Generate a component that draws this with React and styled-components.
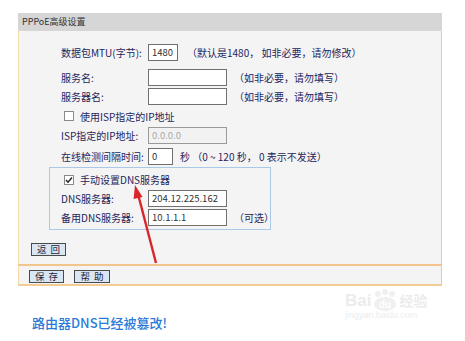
import React from 'react';
import styled, { createGlobalStyle } from 'styled-components';

const GlobalStyle = createGlobalStyle`
  body {
    margin: 0;
    background: #ffffff;
    font-family: "Noto Sans CJK SC", "DejaVu Sans", sans-serif;
  }
`;

const Page = styled.div`
  position: relative;
  width: 465px;
  height: 341px;
  padding: 13px 0 0 18px;
  box-sizing: border-box;
  overflow: hidden;
`;

const Panel = styled.div`
  width: 424px;
`;

const Header = styled.div`
  height: 18px;
  line-height: 18px;
  background: #d6d6d6;
  color: #333;
  font-size: 9px;
  padding-left: 4px;
`;

const Body = styled.div`
  background: #f4f4f4;
  border-left: 1px solid #f6dcae;
  border-right: 1px solid #f1c98f;
  border-bottom: 2px solid #f3c48b;
  padding: 12px 0 8px;
`;

const Row = styled.div`
  display: flex;
  align-items: center;
  height: ${p => p.h || 19}px;
  margin-top: ${p => p.mt || 0}px;
  padding-left: ${p => (p.inBox ? 11 : 42)}px;
  font-size: 10px;
  color: #25255c;
  white-space: nowrap;
`;

const Label = styled.span`
  width: 87px;
  flex: none;
`;

const Input = styled.div`
  box-sizing: border-box;
  width: ${p => p.w}px;
  height: 17px;
  line-height: 15px;
  border: 1px solid ${p => (p.disabled ? '#9a9a9a' : '#707070')};
  background: ${p => (p.disabled ? '#f2f2f2' : '#ffffff')};
  color: ${p => (p.disabled ? '#a8a8a8' : '#333')};
  font-size: 9.5px;
  padding-left: 3px;
  flex: none;
`;

const Hint = styled.span`
  margin-left: ${p => p.ml || 7}px;
`;

const CheckRow = styled(Row)`
  padding-left: ${p => (p.inBox ? 14 : 45)}px;
`;

const Box = styled.span`
  box-sizing: border-box;
  width: 10px;
  height: 10px;
  border: 1px solid #8a8a8a;
  background: #fff;
  margin-right: 6px;
  display: inline-flex;
  align-items: center;
  justify-content: center;
  flex: none;
`;

const DnsBox = styled.div`
  margin: 1px 0 0 30px;
  width: 222px;
  border: 1px solid #a9c9e6;
  padding: 2px 0;
  box-sizing: border-box;
`;

const Button = styled.div`
  box-sizing: border-box;
  width: ${p => p.w || 35}px;
  height: 13px;
  line-height: 11px;
  border: 1px solid #4a4a4a;
  background: #d9e6f4;
  color: #1e1e3c;
  font-size: 9.5px;
  letter-spacing: 4px;
  text-align: center;
  padding-left: 4px;
  white-space: nowrap;
  overflow: hidden;
  margin-right: ${p => p.mr || 0}px;
`;

const BackRow = styled.div`
  margin: 13px 0 0 12px;
  height: 13px;
  display: flex;
`;

const Footer = styled.div`
  background: #f4f4f4;
  border-left: 1px solid #f3d7a8;
  border-right: 1px solid #f1c98f;
  border-bottom: 2px solid #f3cb95;
  height: 20px;
  padding: 4px 0 0 10px;
  box-sizing: border-box;
  display: flex;
`;

const Notice = styled.div`
  margin: 27px 0 0 14px;
  font-size: 13px;
  font-weight: 500;
  color: #2b7ad8;
`;

const Overlay = styled.svg`
  position: absolute;
  left: 0;
  top: 0;
  pointer-events: none;
`;

const Watermark = styled.div`
  position: absolute;
  left: 345px;
  top: 289px;
  color: #ececec;
  font-family: "Liberation Sans", sans-serif;
`;

const MarkLine = styled.div`
  display: flex;
  align-items: center;
  font-size: ${p => p.size}px;
  font-weight: ${p => (p.bold ? 700 : 400)};
  line-height: 1;
`;

const MarkWord = styled.span`
  font-size: 14px;
  font-family: "Noto Sans CJK SC", sans-serif;
`;

function Check({ checked }) {
  return (
    <Box>
      {checked && (
        <svg width="8" height="8" viewBox="0 0 8 8">
          <path d="M1 4 L3 6.2 L7 1.5" stroke="#222" strokeWidth="1.4" fill="none" />
        </svg>
      )}
    </Box>
  );
}

export default function App() {
  return (
    <>
      <GlobalStyle />
      <Page>
        <Panel>
          <Header>PPPoE高级设置</Header>
          <Body>
            <Row>
              <Label>数据包MTU(字节):</Label>
              <Input w={30}>1480</Input>
              <Hint ml={9}>（默认是1480， 如非必要，请勿修改）</Hint>
            </Row>
            <Row mt={6}>
              <Label>服务名:</Label>
              <Input w={79} />
              <Hint>（如非必要，请勿填写）</Hint>
            </Row>
            <Row>
              <Label>服务器名:</Label>
              <Input w={79} />
              <Hint>（如非必要，请勿填写）</Hint>
            </Row>
            <CheckRow h={20}>
              <Check />
              使用ISP指定的IP地址
            </CheckRow>
            <Row>
              <Label>ISP指定的IP地址:</Label>
              <Input w={79} disabled>0.0.0.0</Input>
            </Row>
            <Row h={20} mt={1}>
              <Label>在线检测间隔时间:</Label>
              <Input w={25}>0</Input>
              <Hint>秒 （0 ~ 120 秒， 0 表示不发送）</Hint>
            </Row>
            <DnsBox>
              <CheckRow inBox>
                <Check checked />
                手动设置DNS服务器
              </CheckRow>
              <Row inBox>
                <Label>DNS服务器:</Label>
                <Input w={79}>204.12.225.162</Input>
              </Row>
              <Row inBox>
                <Label>备用DNS服务器:</Label>
                <Input w={79}>10.1.1.1</Input>
                <Hint>（可选）</Hint>
              </Row>
            </DnsBox>
            <BackRow>
              <Button>返回</Button>
            </BackRow>
          </Body>
          <Footer>
            <Button mr={10}>保存</Button>
            <Button w={36}>帮助</Button>
          </Footer>
        </Panel>
        <Notice>路由器DNS已经被篡改!</Notice>
        <Watermark>
          <MarkLine size={17} bold>
            Bai
            <svg width="28" height="22" viewBox="0 0 28 22">
              <circle cx="7" cy="5" r="3" fill="#f0f0f0" />
              <circle cx="14" cy="3" r="3" fill="#f0f0f0" />
              <circle cx="21" cy="5" r="3" fill="#f0f0f0" />
              <ellipse cx="14" cy="15" rx="11" ry="7" fill="#f0f0f0" />
              <text x="14" y="19" fontSize="10" textAnchor="middle" fill="#ffffff" fontFamily="Liberation Sans">du</text>
            </svg>
            <MarkWord>经验</MarkWord>
          </MarkLine>
          <MarkLine size={9}>jingyan.baidu.com</MarkLine>
        </Watermark>
        <Overlay width="465" height="341" viewBox="0 0 465 341">
          <line x1="156" y1="263" x2="138" y2="194" stroke="#d9262b" strokeWidth="2.4" />
          <polygon points="135,185 142.6,197 133.6,199" fill="#d9262b" />
        </Overlay>
      </Page>
    </>
  );
}
